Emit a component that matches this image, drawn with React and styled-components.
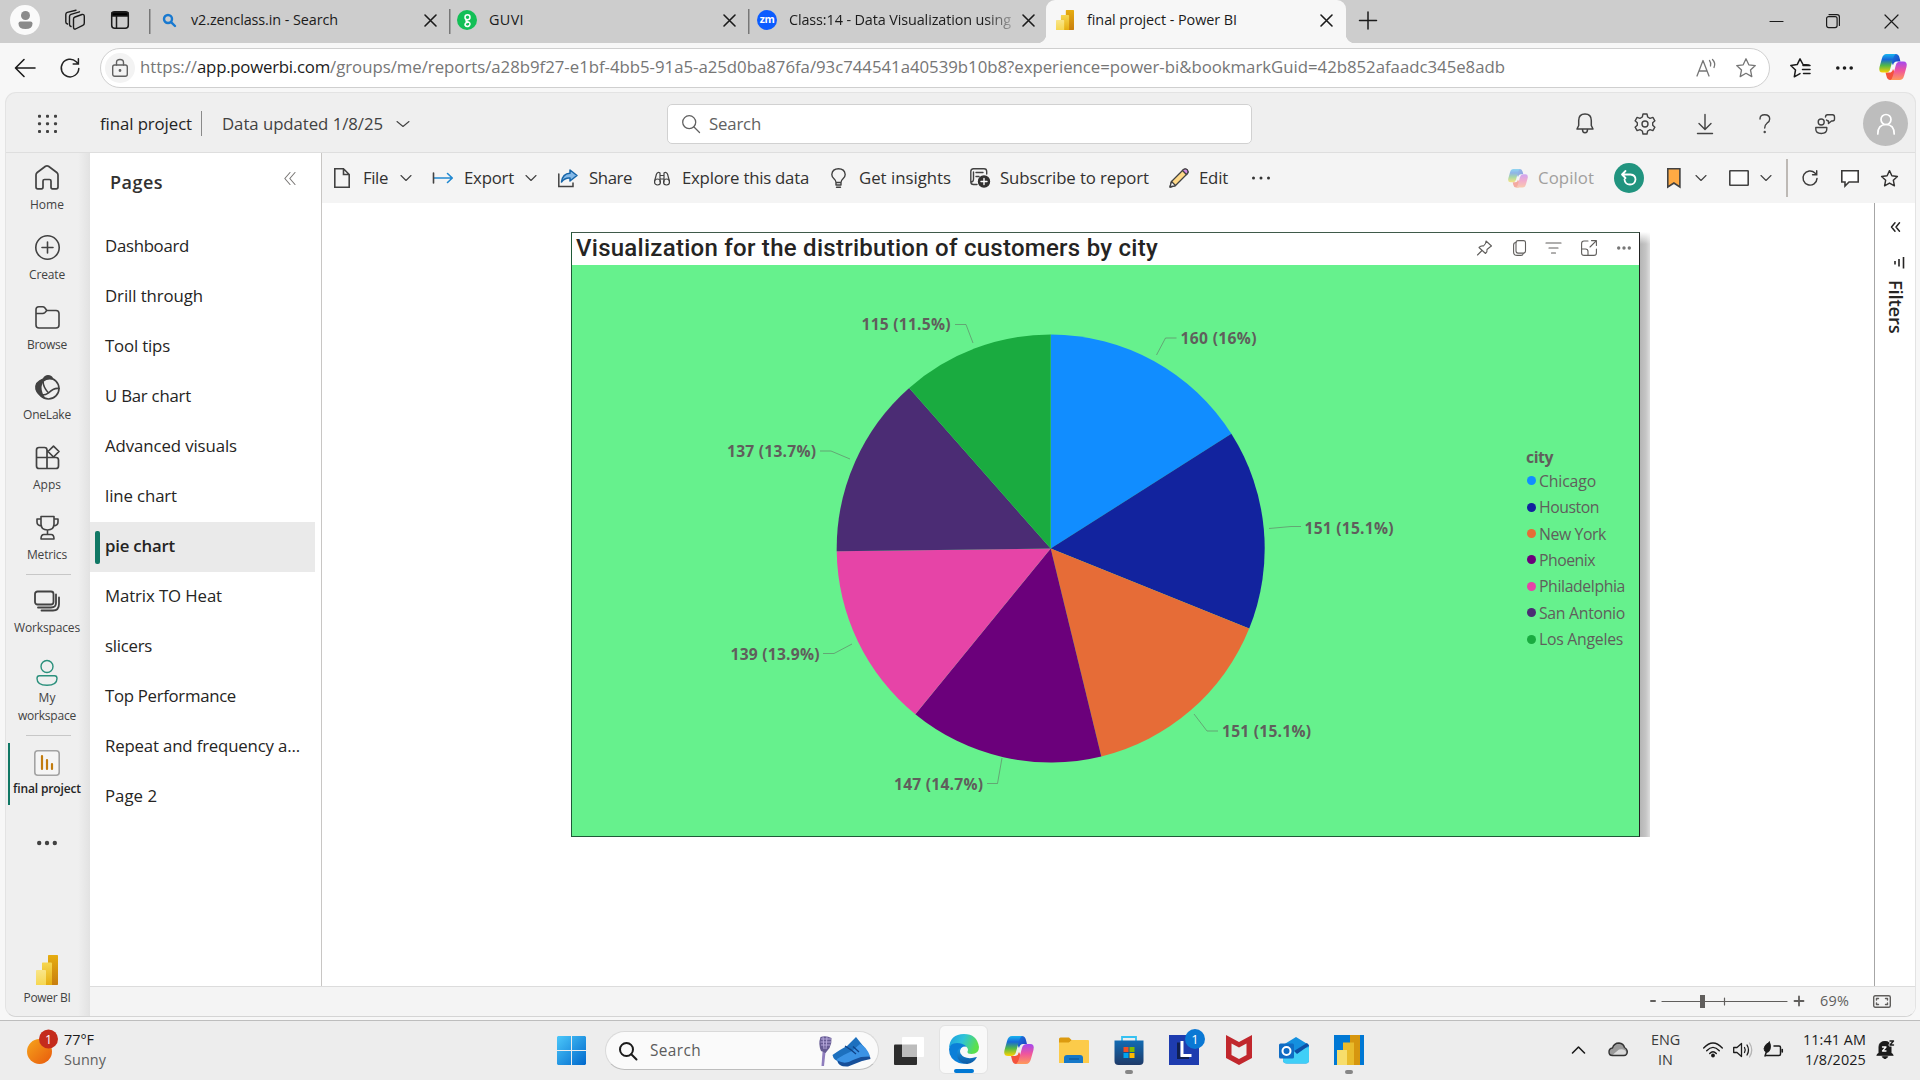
import React, { useLayoutEffect, useRef, useState } from 'react';
import styled, { createGlobalStyle } from 'styled-components';

const GlobalStyle = createGlobalStyle`
  * { box-sizing: border-box; }
  body { margin: 0; background: #f7f7f7; overflow: hidden; }
`;

const Screen = styled.div`
  width: 1920px;
  height: 1080px;
  display: flex;
  flex-direction: column;
  background: #f7f7f7;
  color: #242424;
  font-family: "Open Sans", "Liberation Sans", sans-serif;
  font-size: 16.8px;
  line-height: 1.2;
`;

/* ---------- text fitted to a column width ---------- */
const Fitted = styled.span`
  display: block;
  flex: none;
  width: ${p => p.$w}px;
  margin-left: ${p => p.$ml || 0}px;
  white-space: nowrap;
  color: ${p => p.$color || 'inherit'};
  font-weight: ${p => p.$weight || 'inherit'};
  font-size: ${p => (p.$size ? `${p.$size}px` : 'inherit')};
  font-family: ${p => p.$family || 'inherit'};
`;

function Label({ w, ml, color, weight, size, family, children }) {
  const ref = useRef(null);
  const [spacing, setSpacing] = useState(0);
  useLayoutEffect(() => {
    const natural = ref.current.getBoundingClientRect().width;
    const count = ref.current.textContent.length;
    setSpacing((w - natural) / count);
  }, []);
  return (
    <Fitted $w={w} $ml={ml} $color={color} $weight={weight} $size={size} $family={family}>
      <span ref={ref} style={{ letterSpacing: `${spacing}px` }}>{children}</span>
    </Fitted>
  );
}

/* ---------- icons ---------- */
const Svg = styled.svg`
  display: block;
  flex: none;
  margin-left: ${p => p.$ml || 0}px;
  overflow: visible;
`;

function Icon({ w = 20, h = 20, ml, color = '#424242', sw = 1.4, fill = 'none', children }) {
  return (
    <Svg width={w} height={h} viewBox={`0 0 ${w} ${h}`} $ml={ml} fill={fill} stroke={color}
      strokeWidth={sw} strokeLinecap="round" strokeLinejoin="round">{children}</Svg>
  );
}

const Chevron = ({ ml, w = 10 }) => (
  <Icon w={w} h={6} ml={ml} sw={1.1}><path d={`M0 .5 L${w / 2} 5.5 L${w} .5`} /></Icon>
);
const Close = ({ ml, s = 11, sw = 1.6 }) => (
  <Icon w={s} h={s} ml={ml} color="#1b1b1b" sw={sw}><path d={`M0 0 L${s} ${s} M${s} 0 L0 ${s}`} /></Icon>
);
const Dots = ({ ml, w = 18, r = 1.5, color = '#333' }) => (
  <Icon w={w} h={4} ml={ml} color="none" fill={color}>
    <circle cx={r} cy="2" r={r} /><circle cx={w / 2} cy="2" r={r} /><circle cx={w - r} cy="2" r={r} />
  </Icon>
);
const Star = ({ ml, s = 20, color = '#616161', sw = 1.3 }) => (
  <Svg width={s} height={s} viewBox="0 0 20 20" $ml={ml} fill="none" stroke={color} strokeWidth={sw} strokeLinejoin="round">
    <path d="M10 .8 L12.8 6.8 L19.3 7.6 L14.5 12 L15.8 18.6 L10 15.3 L4.2 18.6 L5.5 12 L.7 7.6 L7.2 6.8 Z" />
  </Svg>
);
const Refresh = ({ ml, s = 20, color = '#242424', sw = 1.5 }) => (
  <Svg width={s} height={s} viewBox="0 0 20 20" $ml={ml} fill="none" stroke={color} strokeWidth={sw} strokeLinecap="round">
    <path d="M18.8 10.5 A8.8 8.8 0 1 1 16.2 3.8 L18.2 5.8 M18.4 .8 V6 H13.2" />
  </Svg>
);

function Copilot({ id, s = 28, ml, faded }) {
  return (
    <Svg width={s} height={s * 0.93} viewBox="0 0 30 28" $ml={ml} opacity={faded ? 0.45 : 1}>
      <defs>
        <linearGradient id={`${id}a`} x1="0" y1="0" x2="0" y2="1">
          <stop offset="0" stopColor="#18b4f0" /><stop offset=".3" stopColor="#1668d8" />
          <stop offset=".62" stopColor="#52b848" /><stop offset="1" stopColor="#ffd200" />
        </linearGradient>
        <linearGradient id={`${id}b`} x1="0" y1="0" x2="0" y2="1">
          <stop offset="0" stopColor="#a348f0" /><stop offset=".5" stopColor="#f0569c" /><stop offset="1" stopColor="#ff9a5a" />
        </linearGradient>
        <linearGradient id={`${id}c`} x1="0" y1="0" x2="1" y2="1">
          <stop offset="0" stopColor="#1a7fe0" /><stop offset="1" stopColor="#1a38c0" />
        </linearGradient>
      </defs>
      <path d="M14 0 H18 Q21 0 22 4 L23 8 H19 Q16 8 15 12 L13 8 Z" fill={`url(#${id}c)`} />
      <path d="M16 28 H12 Q9 28 8 24 L7 20 H11 Q14 20 15 16 L17 20 Z" fill="#f4523c" />
      <path d="M8 0 H18 Q16 1 15 5 L12 16 Q11 20 7 20 H4 Q-1 20 .5 14 L3 5 Q4.300 0 8 0 Z" fill={`url(#${id}a)`} />
      <path d="M22 28 H12 Q14 27 15 23 L18 12 Q19 8 23 8 H26 Q31 8 29.5 14 L27 23 Q25.700 28 22 28 Z" fill={`url(#${id}b)`} />
    </Svg>
  );
}

function PowerBi({ id, w = 22, h = 30, ml }) {
  return (
    <Svg width={w} height={h} viewBox="0 0 22 30" preserveAspectRatio="none" $ml={ml}>
      <defs>
        <linearGradient id={`${id}a`} x1="0" y1="0" x2="0" y2="1"><stop offset="0" stopColor="#e6ad10" /><stop offset="1" stopColor="#c87e0e" /></linearGradient>
        <linearGradient id={`${id}b`} x1="0" y1="0" x2="0" y2="1"><stop offset="0" stopColor="#f6d751" /><stop offset="1" stopColor="#e6ad10" /></linearGradient>
        <linearGradient id={`${id}c`} x1="0" y1="0" x2="0" y2="1"><stop offset="0" stopColor="#f9e589" /><stop offset="1" stopColor="#f6d751" /></linearGradient>
      </defs>
      <rect x="12" y="0" width="10" height="30" rx=".7" fill={`url(#${id}a)`} />
      <path d="M6 8 Q6 7.500 6.700 7.500 H15 Q16 7.500 16 8.500 V30 H6 Z" fill={`url(#${id}b)`} />
      <path d="M0 16 Q0 15 .8 15 H9 Q10 15 10 16 V30 H0 Z" fill={`url(#${id}c)`} />
    </Svg>
  );
}

/* ---------- browser tabs ---------- */
const TabStrip = styled.div`
  height: 43px;
  flex: none;
  display: flex;
  background: #cdcdcd;
  padding-left: 10px;
`;
const Profile = styled.div`
  width: 30px; height: 30px; margin-top: 5px; border-radius: 50%;
  background: #fafafa; display: flex; align-items: center; justify-content: center;
`;
const StripIcons = styled.div`
  width: 109px; height: 40px; display: flex; align-items: center;
`;
const Tab = styled.div`
  width: ${p => p.$w}px;
  height: 40px;
  display: flex;
  align-items: center;
  font-size: 14.4px;
  color: #1b1b1b;
  padding-left: ${p => p.$pl}px;
  background: linear-gradient(#777, #777) 0 9px / 1.5px 25px no-repeat;
`;
const ActiveTab = styled(Tab)`
  height: 43px;
  padding-bottom: 3px;
  background: #f7f7f7;
  border-radius: 9px 9px 0 0;
  position: relative;
  &::before, &::after {
    content: ""; position: absolute; bottom: 0; width: 9px; height: 9px;
  }
  &::before { left: -9px; background: radial-gradient(circle at 0 0, transparent 9px, #f7f7f7 9.5px); }
  &::after { right: -9px; background: radial-gradient(circle at 100% 0, transparent 9px, #f7f7f7 9.5px); }
`;
const FadedTitle = styled.div`
  width: 224px; margin-left: 12px;
  mask-image: linear-gradient(90deg, #000 196px, transparent 232px);
`;
const Favicon = styled.div`
  width: 20px; height: 20px; border-radius: 50%; flex: none;
  background: ${p => p.$bg}; color: #fff; display: flex; align-items: center; justify-content: center;
  font-size: 10.5px; font-weight: 700; padding-bottom: ${p => p.$pb || 0}px; letter-spacing: -.4px;
`;
const WindowButtons = styled.div`
  flex: 1; height: 42px; display: flex; align-items: center; justify-content: flex-end; padding-right: 22px;
`;

function Tabs() {
  return (
    <TabStrip>
      <Profile>
        <Svg width="15" height="18" viewBox="0 0 15 18" fill="#8a8a8a"><circle cx="7.500" cy="4.500" r="4.500" /><path d="M0.500 12.500 Q0.500 10.500 2.500 10.500 H12.500 Q14.500 10.500 14.500 12.500 Q14.500 18 7.500 18 Q0.500 18 .5 12.500Z" /></Svg>
      </Profile>
      <StripIcons>
        <Icon w={20} h={20} ml={25} color="#1b1b1b" sw={1.4}>
          <path d="M8.500 9 Q8.500 7.500 10 7 L17 4.500 Q19.300 4 19.300 6.500 V13 Q19.300 14.800 17.800 15.300 L10.500 19 Q8.500 19.500 8.500 17 Z" />
          <path d="M6 16.500 Q4.500 16 4.500 14.500 V6.500 Q4.500 5 6 4.400 L14.500 1.800 M2.500 14 Q.8 13.500 .8 12 V4.500 Q.8 3 2.300 2.400 L11 .2" />
        </Icon>
        <Icon w={18} h={18} ml={26} color="#1b1b1b" sw={1.5}>
          <rect x=".7" y=".7" width="16.600" height="16.600" rx="3" /><path d="M1 1.500 H17 V5 H1 Z" fill="#000" /><path d="M5.500 5 V17" />
        </Icon>
      </StripIcons>
      <Tab $w={300} $pl={14}>
        <Icon w={13} h={13} color="#1879d0" sw={2.4}><circle cx="5" cy="5" r="4" /><path d="M8.300 8.300 L12 12" /></Icon>
        <Label w={147} ml={15}>v2.zenclass.in - Search</Label>
        <Close ml={87} />
      </Tab>
      <Tab $w={299} $pl={8}>
        <Favicon $bg="#13bf56">
          <Icon w={7} h={13} color="#fff" sw={1.5}><circle cx="3.500" cy="3.300" r="2.500" /><path d="M3.500 5.800 Q1 6.500 2.500 7.500 L5 8.300 Q7 10 5 12 Q2.500 13.500 1 11 Q1 8.500 4 8.300" /></Icon>
        </Favicon>
        <Label w={35} ml={12}>GUVI</Label>
        <Close ml={200} />
      </Tab>
      <Tab $w={298} $pl={9}>
        <Favicon $bg="#0b5cff" $pb={2}>zm</Favicon>
        <FadedTitle><Label w={222}>Class:14 - Data Visualization using</Label></FadedTitle>
        <Close ml={10} />
      </Tab>
      <ActiveTab $w={300} $pl={10}>
        <PowerBi id="tab" w={18} h={20} />
        <Label w={150} ml={13}>final project - Power BI</Label>
        <Close ml={84} />
      </ActiveTab>
      <WindowButtons>
        <Icon w={18} h={18} color="#1b1b1b" sw={1.5}><path d="M9 0 V17 M.5 8.500 H17.500" /></Icon>
        <Icon w={14} h={14} ml={393} color="#1b1b1b" sw={1.2}><path d="M0 7.500 H13" /></Icon>
        <Icon w={14} h={14} ml={42} color="#1b1b1b" sw={1.2}><rect x=".6" y="2.600" width="10.500" height="11" rx="2" /><path d="M3 .6 H11 Q13.400 .6 13.400 3 V11.500" /></Icon>
        <Close ml={45} s={13} sw={1.2} />
      </WindowButtons>
    </TabStrip>
  );
}

/* ---------- address bar ---------- */
const AddressRow = styled.div`
  height: 49px; flex: none; display: flex; align-items: center; padding-left: 15px;
`;
const AddressBox = styled.div`
  width: 1670px; height: 40px; margin-left: 20px; border: 1px solid #cfcfcf; border-radius: 20px; background: #fff;
  display: flex; align-items: center; padding-left: 4px; color: #767676;
`;
const LockBadge = styled.div`
  width: 30px; height: 30px; border-radius: 50%; background: #f3f3f3; display: flex; align-items: center; justify-content: center;
  margin-right: 5px;
`;

function Address() {
  return (
    <AddressRow>
      <Icon w={20} h={18} color="#1b1b1b" sw={1.6}><path d="M20 9 H1 M9 .5 L.5 9 L9 17.500" /></Icon>
      <Refresh ml={25} s={20} />
      <AddressBox>
        <LockBadge><Icon w={16} h={18} color="#616161" sw={1.4}><rect x=".7" y="6" width="14.600" height="11.300" rx="2" /><path d="M4.500 6 V3.500 Q4.500 .5 8 .5 Q11.500 .5 11.500 3.500 V6" /><circle cx="8" cy="11.500" r=".7" fill="#616161" /></Icon></LockBadge>
        <Label w={57}>https://</Label>
        <Label w={133} color="#1b1b1b">app.powerbi.com</Label>
        <Label w={1175}>/groups/me/reports/a28b9f27-e1bf-4bb5-91a5-a25d0ba876fa/93c744541a40539b10b8?experience=power-bi&amp;bookmarkGuid=42b852afaadc345e8adb</Label>
        <Icon w={20} h={18} ml={191} color="#767676" sw={1.3}><path d="M1 17 L7 1.500 L13 17 M3 12 H11 M13.500 1.500 Q15.500 4 14.500 7 M16.500 .5 Q20 4 18 8.500" /></Icon>
        <Star ml={20} s={20} color="#767676" />
      </AddressBox>
      <Icon w={21} h={20} ml={20} color="#1b1b1b" sw={1.5}><path d="M19 7 L13 6.500 L10 .8 L7.200 6.600 L.8 7.500 L5.500 12 L4.300 18.800 L10 15.600 M13 7.500 H20 M12.500 11.500 H20 M13.500 15.500 H20" /></Icon>
      <Dots ml={25} w={17} r={1.8} color="#1b1b1b" />
      <Copilot id="edge" s={28} ml={26} />
    </AddressRow>
  );
}

/* ---------- app frame ---------- */
const Frame = styled.div`
  width: 1911px; height: 925px; margin-left: 5px; flex: none; overflow: hidden;
  border: 1px solid #e3e3e3; border-bottom-color: #d4d4d4; border-radius: 11px; background: #efefef;
  display: flex; flex-direction: column;
`;
const Header = styled.div`
  height: 60px; flex: none; display: flex; align-items: center; padding: 2px 0 0 32px; color: #242424;
  border-bottom: 1px solid #dedede;
  & span { padding-top: .5px; }
`;
const VRule = styled.div`
  width: ${p => p.$w || 1}px; height: ${p => p.$h}px; background: ${p => p.$color || '#8a8a8a'}; margin-left: ${p => p.$ml}px; flex: none;
`;
const SearchBox = styled.div`
  width: 585px; height: 40px; margin-left: 258px; background: #fff; border: 1px solid #d1d1d1; border-radius: 5px;
  display: flex; align-items: center; padding-left: 14px; color: #616161;
`;
const Avatar = styled.div`
  width: 45px; height: 45px; border-radius: 50%; background: #bdbdbd; margin-left: 28px; display: flex; align-items: center; justify-content: center;
`;

function AppHeader() {
  return (
    <Header>
      <Icon w={20} h={20} color="none" fill="#424242">
        {[0, 1, 2].map(r => [0, 1, 2].map(c => <rect key={`${r}${c}`} x={c * 8} y={r * 7.6 + .7} width="3" height="3" rx="1" />))}
      </Icon>
      <Label w={92} ml={42}>final project</Label>
      <VRule $ml={9} $h={25} />
      <Label w={161} ml={20} color="#424242">Data updated 1/8/25</Label>
      <Chevron ml={14} w={12} />
      <SearchBox>
        <Icon w={18} h={18} color="#616161" sw={1.3}><circle cx="7.200" cy="7.200" r="6.500" /><path d="M12 12 L17.500 17.500" /></Icon>
        <Label w={52} ml={9}>Search</Label>
      </SearchBox>
      <Icon w={18} h={21} ml={324} sw={1.5}><path d="M1 16 H17 L15.300 12.500 V7.500 Q15.300 1 9 1 Q2.700 1 2.700 7.500 V12.500 Z M6.500 16.500 Q6.500 19.800 9 19.800 Q11.500 19.800 11.500 16.500" /></Icon>
      <Svg width="22" height="22" viewBox="0 0 22 22" $ml={40} fill="none" stroke="#424242" strokeWidth="1.4" strokeLinejoin="round">
        <path d="M9 1 H13 L13.700 4 L16 5.300 L18.900 4.400 L20.900 7.800 L18.700 9.800 V12.200 L20.900 14.200 L18.900 17.600 L16 16.700 L13.700 18 L13 21 H9 L8.300 18 L6 16.700 L3.100 17.600 L1.100 14.200 L3.300 12.200 V9.800 L1.100 7.800 L3.100 4.400 L6 5.300 L8.300 4 Z" /><circle cx="11" cy="11" r="3" />
      </Svg>
      <Icon w={16} h={20} ml={41}><path d="M8 .5 V15 M2 9.500 L8 15.500 L14 9.500 M.5 19.500 H15.500" /></Icon>
      <Icon w={12} h={19} ml={46}><path d="M1 5 Q1 .8 5.700 .8 Q10.700 .8 10.700 5 Q10.700 7.500 8 9.200 Q5.700 11 5.700 14" /><circle cx="5.700" cy="18" r=".5" fill="#424242" /></Icon>
      <Icon w={20} h={20} ml={44}><circle cx="6.200" cy="8" r="3" /><path d="M.8 13.500 H11.800 V15 Q11.800 19.500 6.300 19.500 Q.8 19.500 .8 15 Z M10.500 3 Q10.500 .8 12.500 .8 H17.500 Q19.500 .8 19.500 3 V5 Q19.500 7 17.500 7 H16.500 L13.500 9.500 V7 Q12.500 7 11.500 6" /></Icon>
      <Avatar><Icon w={18} h={20} color="#fff" sw={1.7}><circle cx="9" cy="5.500" r="5" /><path d="M.8 20 Q.8 10.500 9 10.500 Q17.200 10.500 17.200 20" /></Icon></Avatar>
    </Header>
  );
}

const Body = styled.div`flex: 1; display: flex; min-height: 0;`;

const Nav = styled.div`
  width: 84px; flex: none; display: flex; flex-direction: column; align-items: center; color: #424242;
  background: linear-gradient(90deg, #efefef 72px, #e2e2e2 84px); font-size: 12px; line-height: 18px;
`;
const NavItem = styled.div`
  width: 84px; height: ${p => p.$h}px; display: flex; flex-direction: column; align-items: center; padding: ${p => p.$pt}px 4px 0 0; flex: none;
  & > svg { margin-bottom: ${p => p.$gap}px; }
  border-left: 2px solid ${p => (p.$active ? '#117865' : 'transparent')};
`;
const ActiveItem = styled(NavItem)`
  width: 80px; margin-top: 7px; border-left-width: 2.5px; color: #242424; font-weight: 600;
`;
const HRule = styled.div`width: 45px; height: 1px; background: #c7c7c7; flex: none;`;
const Spacer = styled.div`flex: 1;`;

function SideNav() {
  return (
    <Nav>
      <NavItem $h={70} $pt={12} $gap={6}>
        <Icon w={24} h={25} sw={1.7}><path d="M1 10 Q1 8.500 2.200 7.500 L10.500 1.300 Q12 .3 13.500 1.300 L21.800 7.500 Q23 8.500 23 10 V22 Q23 23.800 21.200 23.800 H17.500 Q16 23.800 16 22 V16 Q16 14.500 14.500 14.500 H9.500 Q8 14.500 8 16 V22 Q8 23.800 6.500 23.800 H2.800 Q1 23.800 1 22 Z" /></Icon>
        <Label w={34}>Home</Label>
      </NavItem>
      <NavItem $h={70} $pt={12} $gap={6}>
        <Icon w={25} h={25} sw={1.6}><circle cx="12.500" cy="12.500" r="11.700" /><path d="M12.500 7 V18 M7 12.500 H18" /></Icon>
        <Label w={36}>Create</Label>
      </NavItem>
      <NavItem $h={70} $pt={12} $gap={6}>
        <Icon w={25} h={25} sw={1.6}><path d="M1 8.500 V4.500 Q1 1.800 3.800 1.800 H7.500 Q9 1.800 10 3 L11.800 5.500 H21 Q24 5.500 24 8.500 V20 Q24 23 21 23 H4 Q1 23 1 20 V8.500 H7.500 Q9 8.500 10 7.500 L11.800 5.500" /></Icon>
        <Label w={40}>Browse</Label>
      </NavItem>
      <NavItem $h={70} $pt={12} $gap={6}>
        <Icon w={25} h={25} sw={1.6}><circle cx="13.500" cy="13.500" r="10.500" /><path d="M8.500 4 Q10 .8 13 .8 Q16.500 .8 17.500 4 Q12 3 8 6 Q4 11 7 19 L9 22.500 Q2.500 19.500 1 14 Q0 7 8.500 4 Z" fill="#424242" /><path d="M8 6 Q8 12 13.500 18 Q19 12.500 24 13.500 M7 20 Q11 20 13.500 18" /></Icon>
        <Label w={48}>OneLake</Label>
      </NavItem>
      <NavItem $h={70} $pt={12} $gap={6}>
        <Icon w={25} h={25} sw={1.7}><path d="M1.500 12.500 V5 Q1.500 2.500 4 2.500 H9.500 Q12 2.500 12 5 V23.500 H4 Q1.500 23.500 1.500 21 V12.500 H21 Q23.500 12.500 23.500 15 V21 Q23.500 23.500 21 23.500 H12 M18.500 1.200 L24 6.500 L18.500 12 L13 6.500 Z" /></Icon>
        <Label w={28}>Apps</Label>
      </NavItem>
      <NavItem $h={71} $pt={12} $gap={6}>
        <Icon w={23} h={25} sw={1.6}><path d="M5 1.500 H18 V9 Q18 15 11.500 15 Q5 15 5 9 Z M5 4 H1 V7 Q1 10.500 5.500 11 M18 4 H22 V7 Q22 10.500 17.500 11 M11.500 15 V19.500 M5 24 Q5 19.500 8 19.500 H15 Q18 19.500 18 24 Z" /></Icon>
        <Label w={40}>Metrics</Label>
      </NavItem>
      <HRule />
      <NavItem $h={78} $pt={15} $gap={7}>
        <Icon w={26} h={22} sw={1.8}><rect x="1" y="1.500" width="18.500" height="13" rx="2.500" /><path d="M4 17.500 H17 Q22 17.500 22 13 V4.500 M7.500 20.500 H19 Q25 20.500 25 14 V7.500" /></Icon>
        <Label w={66}>Workspaces</Label>
      </NavItem>
      <NavItem $h={82} $pt={7} $gap={3}>
        <Icon w={22} h={26} color="#2b907c" sw={1.4}><circle cx="11" cy="6.500" r="6" /><path d="M3.500 15.800 H18.500 Q21 15.800 21 18.500 Q21 25.200 11 25.200 Q1 25.200 1 18.500 Q1 15.800 3.500 15.800 Z" /></Icon>
        <Label w={17}>My</Label>
        <Label w={58}>workspace</Label>
      </NavItem>
      <HRule />
      <ActiveItem $h={62} $pt={7} $gap={4} $active>
        <Icon w={26} h={26} color="#a3a3a3" sw={1.6}><rect x=".8" y=".8" width="24.400" height="24.400" rx="3" fill="#f5f5f5" /><path d="M8 6 V19 M13 10 V19 M18 14 V19" stroke="#c27c0e" strokeWidth="2.200" /></Icon>
        <Label w={68}>final project</Label>
      </ActiveItem>
      <NavItem $h={60} $pt={36} $gap={0}><Dots w={20} r={2.2} color="#424242" /></NavItem>
      <Spacer />
      <NavItem $h={61} $pt={0} $gap={4}>
        <PowerBi id="nav" w={22} h={30} />
        <Label w={47}>Power BI</Label>
      </NavItem>
    </Nav>
  );
}

const Main = styled.div`flex: 1; display: flex; flex-direction: column; min-width: 0; background: #fff;`;
const Work = styled.div`height: 833px; flex: none; display: flex;`;

const PagesPane = styled.div`
  width: 232px; flex: none; background: #fff; border-right: 1px solid #c8c6c4;
`;
const PagesHead = styled.div`
  height: 69px; display: flex; padding: 19px 25px 0 20px; justify-content: space-between; font-size: 18px; font-weight: 600; color: #323130;
`;
const PageItem = styled.div`
  width: 225px; height: 50px; padding-left: 5px; display: flex; align-items: center; color: #252423;
  background: ${p => (p.$on ? '#eaeaea' : 'transparent')}; font-weight: ${p => (p.$on ? 600 : 400)};
  &::before { content: ""; width: 5px; height: 33px; margin-right: 5px; border-radius: 2px; background: ${p => (p.$on ? '#117865' : 'transparent')}; }
  & > span { padding-bottom: 2px; }
`;
const PAGES = [
  ['Dashboard', 84], ['Drill through', 98], ['Tool tips', 65], ['U Bar chart', 86], ['Advanced visuals', 132], ['line chart', 72],
  ['pie chart', 70], ['Matrix TO Heat', 117], ['slicers', 47], ['Top Performance', 131], ['Repeat and frequency a...', 195], ['Page 2', 52],
];

const Right = styled.div`flex: 1; display: flex; flex-direction: column; min-width: 0;`;
const CommandBar = styled.div`
  height: 50px; flex: none; background: #f4f4f4; display: flex; align-items: center; padding-left: 12px; color: #323130;
  & > span { padding-top: 1px; }
`;
const ResetButton = styled.div`
  width: 30px; height: 30px; border-radius: 50%; background: #21947f; margin-left: 20px; display: flex; align-items: center; justify-content: center;
`;

function Commands() {
  return (
    <CommandBar>
      <Icon w={16} h={20} sw={1.6}><path d="M.8 .8 H9.500 L15.200 6.500 V19.200 H.8 Z M9.500 .8 V6.500 H15.200" strokeLinejoin="miter" /></Icon>
      <Label w={25} ml={13}>File</Label>
      <Chevron ml={13} />
      <Icon w={20} h={10} ml={22} color="#2088d0" sw={1.6}><path d="M1 5 H19 M14.500 .5 L19.300 5 L14.500 9.500" /><path d="M.5 0 V10" stroke="#424242" /></Icon>
      <Label w={50} ml={11}>Export</Label>
      <Chevron ml={12} />
      <Icon w={20} h={19} ml={22} sw={1.5}><path d="M.8 5 V17.500 H15 V14" strokeLinejoin="miter" /><path d="M12 1 L19 6.500 L12 12 V9 Q7 8.500 3.500 13 Q4.500 4.500 12 4.200 Z" fill="#83b9e8" stroke="#1765a8" /></Icon>
      <Label w={43} ml={11}>Share</Label>
      <Icon w={16} h={15} ml={22} sw={1.2}><circle cx="3.500" cy="11" r="3" /><circle cx="12.500" cy="11" r="3" /><path d="M.6 10 L2.500 3 Q4 .5 6 2 V11 M15.400 10 L13.500 3 Q12 .5 10 2 V11 M6 4.500 H10 M6 8 H10" /></Icon>
      <Label w={127} ml={12}>Explore this data</Label>
      <Icon w={15} h={20} ml={22} sw={1.4}><path d="M5 14.500 Q5 12.500 3 10.700 Q.8 8.800 .8 6.500 Q1.500 .8 7.500 .8 Q13.500 .8 14.200 6.500 Q14.200 8.800 12 10.700 Q10 12.500 10 14.500 Z M5 14.500 V17 H10 V14.500 M5.500 19.200 H9.500" /></Icon>
      <Label w={92} ml={13}>Get insights</Label>
      <Icon w={20} h={20} ml={19} sw={1.4}><path d="M7 16.500 H3.500 Q.8 16.500 .8 14 V3.500 Q.8 .8 3.500 .8 H14 Q16.700 .8 16.700 3.500 V6 M1 14 Q3.500 14 3.500 11 V4 M6 4.500 H13 M6 8.500 H9" /><circle cx="14" cy="13.500" r="5.500" fill="#323130" stroke="#323130" /><path d="M14 10.500 V16.500 M11 13.500 H17" stroke="#fff" /></Icon>
      <Label w={149} ml={10}>Subscribe to report</Label>
      <Icon w={20} h={20} ml={20} sw={1.3}><path d="M1 19 L2.500 13.500 L14 2 Q16 .3 18 2 Q19.700 4 18 6 L6.500 17.500 Z" fill="#ffd987" /><path d="M13.500 2.500 L15 1.200 Q16.500 .3 18.300 1.800 Q19.600 3.500 18.700 5 L17.400 6.500 Z" fill="#d48ae0" /><path d="M1 19 L2.500 13.500 L6.500 17.500 Z" fill="#fff" /></Icon>
      <Label w={29} ml={10}>Edit</Label>
      <Dots ml={24} w={18} r={1.5} />
      <Spacer />
      <Copilot id="cmd" s={20} faded />
      <Label w={56} ml={10} color="#a19f9d">Copilot</Label>
      <ResetButton><Icon w={16} h={16} color="#fff" sw={1.8}><path d="M1 4.500 H9.500 Q14.500 5 14.500 9.500 Q14 14.500 9 14.500 Q4 14.500 3.500 9.500 M4.500 1 L1 4.500 L4.500 8" /></Icon></ResetButton>
      <Icon w={14} h={20} ml={23} sw={1.6}><path d="M.8 .8 H12.900 V19 L6.900 15 L.8 19 Z" fill="#ffaa44" strokeLinejoin="miter" /></Icon>
      <Chevron ml={15} />
      <Icon w={20} h={16} ml={23} sw={1.6}><rect x=".8" y=".8" width="18.400" height="14.400" rx=".5" fill="#fafafa" /></Icon>
      <Chevron ml={12} />
      <VRule $w={2} $h={38} $ml={15} $color="#bdb9b5" />
      <Refresh ml={14} s={16} sw={1.8} color="#3b3a39" />
      <Icon w={18} h={17} ml={23} sw={1.6} color="#3b3a39"><path d="M.8 .8 H17.200 V12 H8 L4 16 V12 H.8 Z" fill="#fff" strokeLinejoin="miter" /></Icon>
      <Star ml={22} s={17} color="#323130" sw={1.7} />
      <VRule $w={17} $h={1} $ml={0} $color="transparent" />
    </CommandBar>
  );
}

const Canvas = styled.div`flex: 1; display: flex; min-height: 0; background: #fff;`;
const ReportArea = styled.div`width: 1552px; padding: 29px 0 0 249px; flex: none;`;
const VisualShadow = styled.div`
  width: 1079px; height: 605px; display: flex;
`;
const EdgeShade = styled.div`
  width: 10px; height: 605px; background: linear-gradient(#fff, transparent 12px), linear-gradient(90deg, #b5b5b5, #c6c6c6 60%, #dedede);
`;
const Visual = styled.div`
  width: 1069px; height: 605px; border: 1px solid #1f5a38; border-top-color: #3f5a4a; border-right-color: #222; background: #66f18d;
`;
const VisualHead = styled.div`
  height: 32px; background: #fff; display: flex; align-items: center; padding: 0 8px 2px 4px;
`;
const VisualBody = styled.div`
  height: 571px; display: flex;
`;

const SLICES = [
  { name: 'Chicago', value: 160, color: '#118dff', label: '160 (16%)', x: 1180.5, y: 338.5, w: 76, line: '1156.500,355 1165.500,338 1176.500,338' },
  { name: 'Houston', value: 151, color: '#12239e', label: '151 (15.1%)', x: 1304.5, y: 528, w: 89, line: '1269,528.500 1291,526.500 1301,526.500' },
  { name: 'New York', value: 151, color: '#e66c37', label: '151 (15.1%)', x: 1222, y: 731.5, w: 89, line: '1194,714 1207,731 1218,731' },
  { name: 'Phoenix', value: 147, color: '#6b007b', label: '147 (14.7%)', x: 894, y: 784.5, w: 89, line: '1002,758 997.500,783.500 987,783.500' },
  { name: 'Philadelphia', value: 139, color: '#e644a7', label: '139 (13.9%)', x: 730.5, y: 654.5, w: 89, line: '852,644 834,653.500 823,653.500' },
  { name: 'San Antonio', value: 137, color: '#4b2c74', label: '137 (13.7%)', x: 727, y: 451.5, w: 89, line: '850,459 831,451 820,451' },
  { name: 'Los Angeles', value: 115, color: '#1aab40', label: '115 (11.5%)', x: 861.5, y: 324.5, w: 89, line: '973,343 966,324.500 955,324.500' },
];
const LEGEND_WIDTHS = [57, 60, 67, 56, 86, 86, 84];

const ChartSvg = styled.svg`
  display: block; flex: none;
  text { font: 700 15.600px "Open Sans", sans-serif; fill: #605e5c; }
`;

function Pie() {
  const cx = 1050.7, cy = 548.5, r = 214;
  let acc = 0;
  const point = v => {
    const a = (v / 1000) * Math.PI * 2;
    return `${cx + r * Math.sin(a)} ${cy - r * Math.cos(a)}`;
  };
  return (
    <ChartSvg width="947" height="571" viewBox="572 265 947 571">
      {SLICES.map(s => {
        const from = point(acc);
        acc += s.value;
        return <path key={s.name} d={`M${cx} ${cy} L${from} A${r} ${r} 0 0 1 ${point(acc)} Z`} fill={s.color} />;
      })}
      {SLICES.map(s => (
        <g key={s.name}>
          <polyline points={s.line} fill="none" stroke="#605e5c" strokeOpacity=".5" strokeWidth="1" />
          <text x={s.x} y={s.y + 5.5} textLength={s.w} lengthAdjust="spacing">{s.label}</text>
        </g>
      ))}
    </ChartSvg>
  );
}

const Legend = styled.div`
  padding: 181px 0 0 7px; color: #605e5c; font-size: 15.8px;
`;
const LegendTitle = styled.div`height: 22px; font-weight: 700; line-height: 22px;`;
const LegendRow = styled.div`
  height: 26.4px; display: flex; align-items: center;
  &::before { content: ""; width: 9px; height: 9px; border-radius: 50%; margin: -1px 3px 0 1px; background: ${p => p.$color}; }
`;

const FiltersPane = styled.div`
  flex: 1; border-left: 1px solid #a6a6a6; display: flex; flex-direction: column; align-items: center; padding-top: 19px; color: #252423;
`;
const FiltersTitle = styled.div`
  writing-mode: vertical-rl; font-size: 18.400px; font-weight: 600; letter-spacing: -.2px; margin: 11px 0 0 2px; line-height: 20px;
`;

const StatusBar = styled.div`
  flex: 1; background: #f4f4f4; border-top: 1px solid #dcdcdc; display: flex; align-items: center; justify-content: flex-end; padding: 0 24px 1px 0; color: #605e5c;
`;

function Report() {
  return (
    <Canvas>
      <ReportArea>
        <VisualShadow>
          <Visual>
            <VisualHead>
              <Label w={582} size={24} weight={500} color="#252423" family={'Roboto, sans-serif'}>Visualization for the distribution of customers by city</Label>
              <Spacer />
              <Icon w={15} h={16} color="#605e5c" sw={1.1}><path d="M9 1 L14.500 6 L13 7 L10 9.500 Q10.500 12 8.500 13.500 L2 7.500 Q4 5.500 6.500 6 L8.500 3.500 Z M5 10.500 L.5 15" /></Icon>
              <Icon w={13} h={16} ml={21} color="#605e5c" sw={1.1}><rect x="3" y=".6" width="9.500" height="12.500" rx="2" /><path d="M3 2.500 Q.6 2.500 .6 5 V12 Q.6 15.400 4 15.400 H8 Q10 15.400 10.300 13.500" /></Icon>
              <Icon w={16} h={12} ml={20} color="#605e5c" sw={1.2}><path d="M0 1 H15 M3 6 H12 M5.500 11 H9.500" /></Icon>
              <Icon w={16} h={16} ml={19} color="#605e5c" sw={1.1}><path d="M7 1 H3 Q.6 1 .6 3.500 V13 Q.6 15.400 3 15.400 H13 Q15.400 15.400 15.400 13 V9 M9 7 L15.200 .8 M10.500 .6 H15.400 V5.500 M.6 9 H4.500 Q7 9 7 11.500 V15.400" /></Icon>
              <Dots ml={20} w={14} r={1.7} color="#777" />
            </VisualHead>
            <VisualBody>
              <Pie />
              <Legend>
                <LegendTitle><Label w={27}>city</Label></LegendTitle>
                {SLICES.map((s, i) => (
                  <LegendRow key={s.name} $color={s.color}><Label w={LEGEND_WIDTHS[i]}>{s.name}</Label></LegendRow>
                ))}
              </Legend>
            </VisualBody>
          </Visual>
          <EdgeShade />
        </VisualShadow>
      </ReportArea>
      <FiltersPane>
        <Icon w={9} h={10} ml={1} color="#252423" sw={1.5}><path d="M4 .8 L.5 5 L4 9.200 M8.500 .8 L5 5 L8.500 9.200" /></Icon>
        <Svg width="18" height="37" viewBox="0 0 18 37" $ml={7} stroke="#252423" strokeWidth="1.6" fill="none"><path d="M13.500 25 V36.500 M9 27 V34.500 M5 29 V32.500" /></Svg>
        <FiltersTitle>Filters</FiltersTitle>
      </FiltersPane>
    </Canvas>
  );
}

function Status() {
  return (
    <StatusBar>
      <Icon w={6} h={12} color="#605e5c" sw={2}><path d="M1 6 H5" /></Icon>
      <Icon w={126} h={14} ml={6} color="#605e5c" sw={1.2}><path d="M0 7.500 H125 M62.500 4 V11" /><rect x="38" y="1" width="5" height="13" fill="#605e5c" stroke="none" /></Icon>
      <Icon w={10} h={10} ml={6} color="#605e5c" sw={1.8}><path d="M5 .5 V9.500 M.5 5 H9.500" /></Icon>
      <Label w={29} ml={16.5} size={14.4}>69%</Label>
      <Icon w={18} h={13} ml={24} color="#605e5c" sw={1.4}><rect x=".7" y=".7" width="16.600" height="11.600" rx="1.500" /><path d="M3.500 5 V3.500 H5.500 M12.500 3.500 H14.500 V5 M14.500 8 V9.500 H12.500 M5.500 9.500 H3.500 V8" /></Icon>
    </StatusBar>
  );
}

/* ---------- taskbar ---------- */
const Taskbar = styled.div`
  height: 60px; margin-top: 3px; flex: none; background: #ededed; border-top: 1px solid #bdbdbd; display: flex; align-items: center;
  font-size: 14.4px; padding: 0 25px 2px 27px; color: #1b1b1b;
`;
const Weather = styled.div`width: 530px; display: flex; align-items: center;`;
const Stack = styled.div`
  display: flex; flex-direction: column; align-items: ${p => p.$align || 'flex-start'}; line-height: 20px; margin-left: ${p => p.$ml}px;
`;
const TaskSearch = styled.div`
  width: 274px; height: 39px; margin: 2px 0 0 19px; border-radius: 20px; background: #fafafa; border: 1px solid #d9d9d9; border-bottom-color: #bdbdbd;
  display: flex; align-items: center; padding-left: 13px; color: #5c5c5c;
  & > span { padding-top: 1.5px; }
`;
const EdgeTile = styled.div`
  width: 49px; height: 49px; margin-left: 15px; background: #f9f9f9; border: 1px solid #e3e3e3; border-radius: 6px; display: flex; flex-direction: column;
  align-items: center; padding-top: 8px; gap: 5px;
`;
const Running = styled.div`width: 20px; height: 4px; border-radius: 2px; background: #0078d4;`;
const TaskIcon = styled.div`
  width: 30px; height: 48px; margin-left: ${p => p.$ml || 25}px; padding-top: ${p => p.$pt || 9}px; display: flex; flex-direction: column; align-items: center; flex: none;
`;
const Dash = styled.div`width: 8px; height: 4px; border-radius: 2px; background: #868686; margin-top: 5px;`;

function TaskbarRow() {
  return (
    <Taskbar>
      <Weather>
        <Svg width="32" height="34" viewBox="0 0 32 34">
          <defs><linearGradient id="sun" x1="0" y1="0" x2="1" y2="1"><stop offset="0" stopColor="#f6a51c" /><stop offset="1" stopColor="#e8590c" /></linearGradient></defs>
          <circle cx="12.500" cy="18.500" r="12.500" fill="url(#sun)" />
          <circle cx="21.500" cy="6" r="9.500" fill="#c42b1c" />
          <text x="21.500" y="10.500" fontSize="12.500" fill="#fff" textAnchor="middle" fontFamily="Open Sans, sans-serif">1</text>
        </Svg>
        <Stack $ml={5}><Label w={30}>77°F</Label><Label w={42} color="#5f5f5f">Sunny</Label></Stack>
      </Weather>
      <Svg width="29" height="29" viewBox="0 0 29 29">
        <defs><linearGradient id="win" x1="0" y1="0" x2="1" y2="1"><stop offset="0" stopColor="#4cc8fa" /><stop offset="1" stopColor="#0068cc" /></linearGradient></defs>
        <path d="M1 1 H14 V15 H0 V2 Z M15 1 H28 L29 2 V15 H15 Z M0 16 H14 V30 H1 L0 29 Z M15 16 H29 V29 L28 30 H15 Z" fill="url(#win)" />
      </Svg>
      <TaskSearch>
        <Icon w={18} h={18} color="#1b1b1b" sw={2}><circle cx="7.500" cy="7.500" r="6.500" /><path d="M12.300 12.300 L17.500 17.500" /></Icon>
        <Label w={51} ml={13} size={15.4}>Search</Label>
        <Svg width="52" height="32" viewBox="0 0 52 32" $ml={118}>
          <path d="M3.500 17 L6.500 17 L5 31 H2.500 Z" fill="#8f7dbd" />
          <path d="M1.500 2 Q7 0 12.500 3 Q13 8 10.500 13 L6.500 18 L2 16 Q-1 9 1.500 2 Z" fill="#665b93" />
          <path d="M2 4 H12 M1.500 7 H12 M2 10 H11 M4 1.500 L5 14 M8 1.500 L7 14" stroke="#b6a8db" strokeWidth="1" />
          <path d="M13.500 20 Q22 14 28 11 L37 2 L45 12 Q43 19 36 19 L22 26 Q15 27 13.500 20 Z" fill="#1d70be" />
          <path d="M18 24 Q26 19 33 16 L41 9 Q47 11 51 21 Q48 26 41 25 L29 31 Q18 32 18 24 Z" fill="#3b93e5" />
          <path d="M18.500 25.500 Q26 30 34 25 L42 22 L51 21.500 L51.500 24 L43 26 L29 31.500 Q19 32 18.500 25.500 Z" fill="#174f99" />
          <path d="M31 14 L37 19 M34 11.500 L40 17 M26 11 L32 15" stroke="#0f4287" strokeWidth="1.300" />
        </Svg>
      </TaskSearch>
      <Svg width="30" height="28" viewBox="0 0 30 28" $ml={15}>
        <rect x="0" y="8.500" width="23" height="20.500" rx="1" fill="#2d2d2d" />
        <rect x="8" y="1" width="22" height="20" rx="1" fill="#fff" /><rect x="8" y="8.500" width="15" height="12.500" fill="#bcbcbc" />
      </Svg>
      <EdgeTile>
        <Svg width="30" height="30" viewBox="0 0 30 30">
          <defs>
            <linearGradient id="e1" x1="0" y1="0" x2="1" y2=".3"><stop offset="0" stopColor="#1b9de2" /><stop offset=".5" stopColor="#2fc3d8" /><stop offset="1" stopColor="#5be04c" /></linearGradient>
            <linearGradient id="e2" x1="0" y1="0" x2="0" y2="1"><stop offset="0" stopColor="#1a9ae8" /><stop offset="1" stopColor="#0c59a4" /></linearGradient>
          </defs>
          <path d="M0 14 Q1 0 15 0 Q28 0 30 13 Q30 20 22.500 20 Q18 20 18.500 17.500 Q20 15 17 12.500 Q12 9 6 10 Q2 11 0 14 Z" fill="url(#e1)" />
          <path d="M0 15 Q1 9 8 9 Q14 9 17.500 12.500 Q11 12 10.500 18 Q11 27 20 29 Q15 30.500 10 29 Q0 25 0 15 Z" fill="#0b7fd8" />
          <path d="M13 13 Q10 16 11.500 19.500 Q15 25 23 24 Q27 23 28 23 Q25 29 18 30 Q8 29 8 20 Q8 15 13 13 Z" fill="url(#e2)" />
        </Svg>
        <Running />
      </EdgeTile>
      <TaskIcon $ml={16} $pt={10}><Copilot id="task" s={30} /></TaskIcon>
      <TaskIcon $pt={11}>
        <Svg width="30" height="26" viewBox="0 0 30 26">
          <path d="M0 2 Q0 .5 1.500 .5 H10 L13 3.500 L10 6 H0 Z" fill="#dc9a10" />
          <path d="M0 5.500 H10 L13 3 H29 Q30 3 30 4 V26 H0 Z" fill="#fccb4a" />
          <path d="M5 21 Q5 18 8 18 H21 Q24 18 24 21 V26 H5 Z" fill="#1678c8" /><path d="M10 22 H20" stroke="#0b4f8f" strokeWidth="1" />
        </Svg>
      </TaskIcon>
      <TaskIcon $pt={10}>
        <Svg width="30" height="29" viewBox="0 0 30 29">
          <defs><linearGradient id="st" x1="0" y1="0" x2="0" y2="1"><stop offset="0" stopColor="#126bb3" /><stop offset="1" stopColor="#1f3a68" /></linearGradient></defs>
          <path d="M8 5 V1 H22 V5" fill="none" stroke="#35c1f1" strokeWidth="1.800" />
          <path d="M.5 4.500 H29.500 V25 Q29.500 29 25.500 29 H4.500 Q.5 29 .5 25 Z" fill="url(#st)" />
          <rect x="9.500" y="11" width="5" height="5" fill="#f25022" /><rect x="15.500" y="11" width="5" height="5" fill="#7fba00" />
          <rect x="9.500" y="17" width="5" height="5" fill="#00a4ef" /><rect x="15.500" y="17" width="5" height="5" fill="#ffb900" />
        </Svg>
        <Dash />
      </TaskIcon>
      <TaskIcon>
        <Svg width="30" height="30" viewBox="0 0 30 30">
          <rect width="30" height="30" fill="#1e3caf" /><path d="M11.500 6.500 V21.500 H22" fill="none" stroke="#102050" strokeWidth="3" transform="translate(-2 1)" />
          <path d="M13 6 V20.500 H22.500" fill="none" stroke="#fff" strokeWidth="3" />
          <circle cx="26" cy="4" r="10" fill="#0a78d4" />
          <text x="26" y="9" fontSize="13" fill="#fff" textAnchor="middle" fontFamily="Open Sans, sans-serif">1</text>
        </Svg>
      </TaskIcon>
      <TaskIcon>
        <Svg width="26" height="30" viewBox="0 0 26 30"><path d="M0 0 L13 7 L26 0 V23 L13 30 L0 23 Z M5.500 8.500 V20 L13 24 L20.500 20 V8.500 L13 12.500 Z" fill="#c1272d" fillRule="evenodd" /></Svg>
      </TaskIcon>
      <TaskIcon $pt={11}>
        <Svg width="30" height="27" viewBox="0 0 30 27">
          <path d="M4 8 L17 0 L30 8 V23 Q30 26.500 26.500 26.500 H8 Q4 26.500 4 23 Z" fill="#1490df" />
          <path d="M4 17 L30 10 V23 Q30 26.500 26.500 26.500 H8 Q4 26.500 4 23 Z" fill="#40cff7" /><path d="M15 14 L28 6 L30 8.500 L18 17 Z" fill="#0c4fa5" />
          <rect x="0" y="6.500" width="15" height="15" rx="1.500" fill="#0f6cc4" /><circle cx="7.500" cy="14" r="4" fill="none" stroke="#fff" strokeWidth="2" />
        </Svg>
      </TaskIcon>
      <TaskIcon>
        <Svg width="30" height="30" viewBox="0 0 30 30">
          <rect width="30" height="30" fill="#0078d4" /><rect x="16" width="10" height="30" fill="#d6960f" /><path d="M9 7.500 H20 V30 H9 Z" fill="#e9bb2b" /><path d="M3 15 H13 V30 H3 Z" fill="#f7dd6b" />
        </Svg>
        <Dash />
      </TaskIcon>
      <Spacer />
      <Icon w={13} h={8} color="#1b1b1b" sw={1.6}><path d="M.5 7 L6.500 1 L12.500 7" /></Icon>
      <Icon w={20} h={15} ml={23} color="#333" sw={1.4}><path d="M4.500 13.500 Q1 13.500 1 10 Q1 6.500 4.500 6 Q6 1 11 1 Q15.500 1.500 16.500 5.500 Q19.300 7 19.300 10 Q19 13.500 16 13.500 Z" fill="#9a9a9a" /><path d="M5 12.500 L11 7.500 Q17 6.500 18 10 Q18 12.500 15.500 12.500 Z" fill="#dadada" stroke="none" /></Icon>
      <Stack $ml={23} $align="center"><Label w={29} color="#3b3b3b">ENG</Label><Label w={15} color="#3b3b3b">IN</Label></Stack>
      <Icon w={20} h={15} ml={23} color="#1b1b1b" sw={1.4}><path d="M.7 6 Q10 -4 19.300 6 M3.700 8.800 Q10 2 16.300 8.800 M6.700 11.500 Q10 8 13.300 11.500" /><circle cx="10" cy="13.500" r="1.200" fill="#1b1b1b" /></Icon>
      <Icon w={20} h={16} ml={10} color="#1b1b1b" sw={1.3}><path d="M.7 5.500 H4 L8.500 1.500 V14.500 L4 10.500 H.7 Z M11.500 5.500 Q13 8 11.500 10.500 M14 3 Q17 8 14 13" /><path d="M16.500 1 Q21 8 16.500 15" stroke="#b5b5b5" /></Icon>
      <Icon w={20} h={17} ml={10} color="#1b1b1b" sw={1.5}><path d="M11 5 H16 Q17.500 5 17.500 6.500 V13 Q17.500 14.500 16 14.500 H3 M19.300 8.500 V11" /><path d="M6.500 1 Q8.500 5 7 8.500 Q6 11.500 3.500 11.500 Q1 10.500 1 7.500 Q1.500 3.500 6.500 1 Z" fill="#1b1b1b" strokeWidth=".8" /><path d="M4 9 L2 15" /></Icon>
      <Stack $ml={20} $align="flex-end"><Label w={63}>11:41 AM</Label><Label w={61}>1/8/2025</Label></Stack>
      <Icon w={18} h={20} ml={11} color="#1b1b1b" sw={1}><path d="M0 15 L2 12.500 V7 Q2 1.500 8 1.500 Q14 1.500 14 7 V12.500 L16 15 Z M5.500 17 Q8 20.500 10.500 17 Z" fill="#1b1b1b" /><path d="M13 1 H16.500 L13 5 H16.500" stroke="#ededed" strokeWidth="3" /><path d="M13 1 H16.500 L13 5 H16.500" strokeWidth="1.400" /><path d="M5.500 7 H9 L5.500 11 H9" stroke="#fff" strokeWidth="1.300" /></Icon>
    </Taskbar>
  );
}

export default function App() {
  return (
    <Screen>
      <GlobalStyle />
      <Tabs />
      <Address />
      <Frame>
        <AppHeader />
        <Body>
          <SideNav />
          <Main>
            <Work>
              <PagesPane>
                <PagesHead>
                  <Label w={53}>Pages</Label>
                  <Icon w={12} h={13} color="#797775" sw={1.1}><path d="M6 .5 L.8 6.500 L6 12.500 M11 .5 L5.800 6.500 L11 12.500" /></Icon>
                </PagesHead>
                {PAGES.map(([name, w]) => (
                  <PageItem key={name} $on={name === 'pie chart'}><Label w={w}>{name}</Label></PageItem>
                ))}
              </PagesPane>
              <Right>
                <Commands />
                <Report />
              </Right>
            </Work>
            <Status />
          </Main>
        </Body>
      </Frame>
      <TaskbarRow />
    </Screen>
  );
}
